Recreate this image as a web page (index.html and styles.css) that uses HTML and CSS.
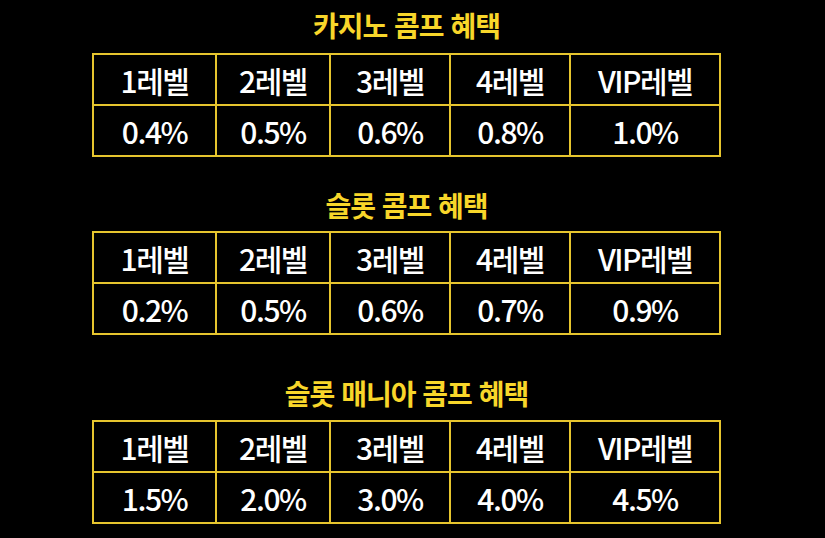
FILE: index.html
```html
<!DOCTYPE html>
<html lang="ko">
<head>
<meta charset="utf-8">
<link rel="stylesheet" href="styles.css">
</head>
<body>
<div class="page">
  <section class="sec sec-1">
    <h2 class="title">카지노 콤프 혜택</h2>
    <table class="comp">
      <colgroup><col class="c1"><col class="c2"><col class="c3"><col class="c4"><col class="c5"></colgroup>
      <tr class="head"><td>1레벨</td><td>2레벨</td><td>3레벨</td><td>4레벨</td><td>VIP레벨</td></tr>
      <tr class="vals"><td>0.4%</td><td>0.5%</td><td>0.6%</td><td>0.8%</td><td>1.0%</td></tr>
    </table>
  </section>
  <section class="sec sec-2">
    <h2 class="title">슬롯 콤프 혜택</h2>
    <table class="comp">
      <colgroup><col class="c1"><col class="c2"><col class="c3"><col class="c4"><col class="c5"></colgroup>
      <tr class="head"><td>1레벨</td><td>2레벨</td><td>3레벨</td><td>4레벨</td><td>VIP레벨</td></tr>
      <tr class="vals"><td>0.2%</td><td>0.5%</td><td>0.6%</td><td>0.7%</td><td>0.9%</td></tr>
    </table>
  </section>
  <section class="sec sec-3">
    <h2 class="title">슬롯 매니아 콤프 혜택</h2>
    <table class="comp">
      <colgroup><col class="c1"><col class="c2"><col class="c3"><col class="c4"><col class="c5"></colgroup>
      <tr class="head"><td>1레벨</td><td>2레벨</td><td>3레벨</td><td>4레벨</td><td>VIP레벨</td></tr>
      <tr class="vals"><td>1.5%</td><td>2.0%</td><td>3.0%</td><td>4.0%</td><td>4.5%</td></tr>
    </table>
  </section>
</div>
</body>
</html>
```

FILE: styles.css
```css
html, body {
  margin: 0;
  padding: 0;
  background: #000;
}
body {
  font-family: "Noto Sans CJK KR", "Noto Sans", sans-serif;
  color: #fff;
}
.page {
  width: 627px;
  padding-left: 93px;
  padding-top: 7px;
}
.sec {
  display: flex;
  flex-direction: column;
  align-items: center;
}
.title {
  margin: 0;
  font-size: 28px;
  font-weight: 700;
  line-height: 36px;
  color: #f8d62a;
  letter-spacing: -1px;
}
.sec-1 .title { margin-bottom: 10px; }
.sec-2 { margin-top: 30px; }
.sec-2 .title { margin-bottom: 8px; }
.sec-3 { margin-top: 40px; }
.sec-3 .title { margin-bottom: 9px; }
.comp {
  width: 627px;
  table-layout: fixed;
  border-collapse: collapse;
}
.c1 { width: 123px; }
.c2 { width: 114px; }
.c3 { width: 120px; }
.c4 { width: 120px; }
.c5 { width: 150px; }
.comp td {
  border: 2px solid #e6c52e;
  text-align: center;
  vertical-align: middle;
  padding: 0;
  font-size: 30px;
  font-weight: 500;
  letter-spacing: -1.5px;
  color: #fff;
}
.head td { height: 49px; }
.vals td { height: 49px; }
```
